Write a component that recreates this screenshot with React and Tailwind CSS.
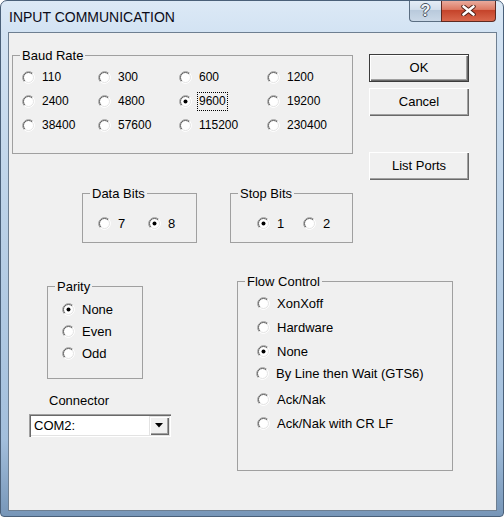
import React from "react";

const BAUD = [
  ["110", "300", "600", "1200"],
  ["2400", "4800", "9600", "19200"],
  ["38400", "57600", "115200", "230400"],
];

function Radio({ checked }) {
  return (
    <svg width="13" height="13" viewBox="0 0 13 13" className="shrink-0">
      <circle cx="6.5" cy="6.5" r="6" fill="#fff" />
      <path d="M2.26 10.74 A6 6 0 0 1 10.74 2.26" fill="none" stroke="#9a9a9a" />
      <path d="M10.74 2.26 A6 6 0 0 1 2.26 10.74" fill="none" stroke="#ffffff" />
      <path d="M2.96 10.04 A5 5 0 0 1 10.04 2.96" fill="none" stroke="#5f5f5f" />
      <path d="M10.04 2.96 A5 5 0 0 1 2.96 10.04" fill="none" stroke="#e3e3e3" />
      {checked && <circle cx="6.5" cy="6.5" r="2" fill="#000" />}
    </svg>
  );
}

function Option({ label, checked, focus, className = "", small, h = "h-[24px]" }) {
  return (
    <div className={`flex items-center ${h} ${className}`}>
      <Radio checked={checked} />
      {focus ? (
        <span className={`ml-[5px] border border-dotted border-black px-[1px] py-[1px] leading-[15px] ${small ? "text-[12px]" : ""}`}>
          {label}
        </span>
      ) : (
        <span className={`ml-[7px] leading-[15px] whitespace-nowrap ${small ? "text-[12px]" : ""}`}>{label}</span>
      )}
    </div>
  );
}

function GroupBox({ label, className = "", children }) {
  return (
    <div className={`relative border border-[#a0a0a0] ${className}`}>
      <span className="absolute -top-[8px] left-[7px] bg-[#f0f0f0] px-[2px] leading-[15px]">{label}</span>
      {children}
    </div>
  );
}

function Button({ children, isDefault, className = "" }) {
  const bevel =
    "bg-[#f0f0f0] shadow-[inset_1px_1px_0_#ffffff,inset_-1px_-1px_0_#696969,inset_-2px_-2px_0_#a0a0a0]";
  if (isDefault) {
    return (
      <div className={`h-[28px] w-[100px] border border-[#3c3c3c] ${className}`}>
        <div className={`flex h-full w-full items-center justify-center ${bevel}`}>{children}</div>
      </div>
    );
  }
  return (
    <div className={`flex h-[28px] w-[100px] items-center justify-center ${bevel} ${className}`}>{children}</div>
  );
}

export default function App() {
  return (
    <div className="h-[517px] w-[504px] overflow-hidden rounded-t-[7px] rounded-b-[4px] border border-[#4a6079] bg-[linear-gradient(180deg,#dce9f6_0%,#d3e3f3_6%,#bcd2e8_40%,#a3bfdc_85%,#7796b8_100%)] font-['Liberation_Sans',Arial,sans-serif] text-[13px] text-black">
      {/* TITLE BAR */}
      <div className="flex h-[31px] items-start">
        <span className="ml-[8px] mt-[8px] text-[14px] leading-[16px] text-[#0b0b18]">INPUT COMMUNICATION</span>
        <div className="-mt-px ml-auto mr-[7px] flex h-[22px]">
          <div className="flex w-[32px] items-center justify-center rounded-bl-[4px] border border-r-0 border-t-0 border-[#5b6e82] bg-[linear-gradient(180deg,#e6eef7_0%,#d3dfec_45%,#b9cadc_50%,#cad8e7_100%)]">
            <span className="text-[16px] font-bold leading-[18px] text-[#f2f4f7] [text-shadow:1px_0_0_#4a5664,-1px_0_0_#4a5664,0_1px_0_#4a5664,0_-1px_0_#4a5664]">?</span>
          </div>
          <div className="flex w-[55px] items-center justify-center rounded-br-[4px] border border-t-0 border-[#5e2a22] bg-[linear-gradient(180deg,#eab0a3_0%,#dc7a64_45%,#c5442b_50%,#d9674c_100%)]">
            <svg width="15" height="11" viewBox="0 0 15 11">
              <path d="M2.5 1.5 L12.5 9.5 M12.5 1.5 L2.5 9.5" stroke="#4a1c14" strokeWidth="4.4" strokeLinecap="round" />
              <path d="M2.5 1.5 L12.5 9.5 M12.5 1.5 L2.5 9.5" stroke="#ffffff" strokeWidth="2.6" strokeLinecap="round" />
            </svg>
          </div>
        </div>
      </div>

      {/* CLIENT AREA */}
      <div className="ml-[7px] flex h-[479px] w-[489px] flex-col border border-[#6e7f91] bg-[#f0f0f0]">
        {/* top row */}
        <div className="flex items-start pl-[3px] pt-[21px]">
          <GroupBox label="Baud Rate" className="mt-[1px] h-[99px] w-[341px]">
            <div className="grid grid-cols-[76px_81px_88px_auto] pl-[9px] pt-[9px]">
              {BAUD.flat().map((b) => (
                <Option key={b} label={b} small checked={b === "9600"} focus={b === "9600"} />
              ))}
            </div>
          </GroupBox>
          <div className="ml-[16px] flex flex-col">
            <Button isDefault>OK</Button>
            <Button className="mt-[6px]">Cancel</Button>
            <Button className="mt-[36px]">List Ports</Button>
          </div>
        </div>

        {/* data / stop bits */}
        <div className="mt-[13px] flex pl-[73px]">
          <GroupBox label="Data Bits" className="h-[50px] w-[115px]">
            <div className="flex pl-[15px] pt-[17px]">
              <Option label="7" className="w-[50px]" />
              <Option label="8" checked />
            </div>
          </GroupBox>
          <GroupBox label="Stop Bits" className="ml-[33px] h-[50px] w-[123px]">
            <div className="flex pl-[26px] pt-[17px]">
              <Option label="1" checked className="w-[46px]" />
              <Option label="2" />
            </div>
          </GroupBox>
        </div>

        {/* parity / connector / flow */}
        <div className="mt-[38px] flex pl-[20px]">
          <div className="flex w-[142px] flex-col">
            <GroupBox label="Parity" className="ml-[18px] mt-[5px] h-[93px] w-[96px]">
              <div className="flex flex-col pl-[14px] pt-[11px]">
                <Option label="None" checked h="h-[22px]" />
                <Option label="Even" h="h-[22px]" />
                <Option label="Odd" h="h-[22px]" />
              </div>
            </GroupBox>
            <span className="ml-[20px] mt-[14px] leading-[15px]">Connector</span>
            <div className="mt-[6px] flex h-[23px] w-[142px] bg-white shadow-[inset_1px_1px_0_#a0a0a0,inset_2px_2px_0_#696969,inset_-1px_-1px_0_#ffffff,inset_-2px_-2px_0_#e3e3e3]">
              <span className="flex-1 self-center pl-[5px] leading-[15px]">COM2:</span>
              <div className="my-[2px] mr-[2px] flex w-[20px] items-center justify-center bg-[#f0f0f0] shadow-[inset_1px_1px_0_#e3e3e3,inset_2px_2px_0_#ffffff,inset_-1px_-1px_0_#696969,inset_-2px_-2px_0_#a0a0a0]">
                <svg width="8" height="5" viewBox="0 0 8 5">
                  <polygon points="0,0 8,0 4,4.5" fill="#000" />
                </svg>
              </div>
            </div>
          </div>
          <GroupBox label="Flow Control" className="ml-[66px] h-[190px] w-[216px]">
            <div className="flex flex-col pl-[19px] pt-[9px]">
              <Option label="XonXoff" />
              <Option label="Hardware" />
              <Option label="None" checked />
              <Option label="By Line then Wait (GTS6)" className="-ml-[1px] -mt-[2px]" />
              <Option label="Ack/Nak" className="mt-[2px]" />
              <Option label="Ack/Nak with CR LF" />
            </div>
          </GroupBox>
        </div>
      </div>
    </div>
  );
}
